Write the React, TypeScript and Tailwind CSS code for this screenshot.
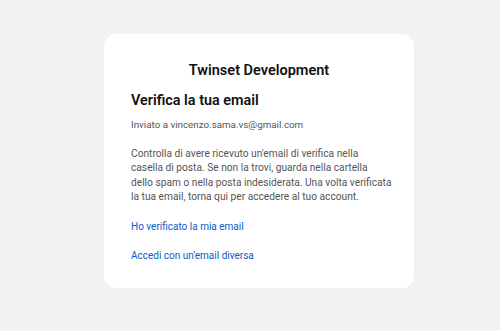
export default function App() {
  return (
    <div className="min-h-screen w-full bg-[#f2f2f2] flex justify-center pl-[18px] pt-[34px]" style={{ fontFamily: "Roboto, 'Liberation Sans', sans-serif" }}>
      <div className="w-[310px] h-[254px] bg-white rounded-xl px-[27px] pt-[27px]">
        <h1 className="text-center text-[14.5px] font-semibold text-[#111] leading-[20px]">Twinset Development</h1>
        <h2 className="mt-[10px] text-[14.4px] font-semibold text-[#111] leading-[20px]">Verifica la tua email</h2>
        <p className="mt-[7px] text-[9.8px] text-[#555] leading-[14px]">Inviato a vincenzo.sama.vs@gmail.com</p>
        <p className="mt-[15px] whitespace-nowrap text-[10.2px] text-[#555] leading-[14.4px]">
          Controlla di avere ricevuto un'email di verifica nella<br />
          casella di posta. Se non la trovi, guarda nella cartella<br />
          dello spam o nella posta indesiderata. Una volta verificata<br />
          la tua email, torna qui per accedere al tuo account.
        </p>
        <a className="block mt-[15px] text-[10px] text-[#0a5cc9] leading-[14px]">Ho verificato la mia email</a>
        <a className="block mt-[15px] text-[10px] text-[#0a5cc9] leading-[14px]">Accedi con un'email diversa</a>
      </div>
    </div>
  );
}
